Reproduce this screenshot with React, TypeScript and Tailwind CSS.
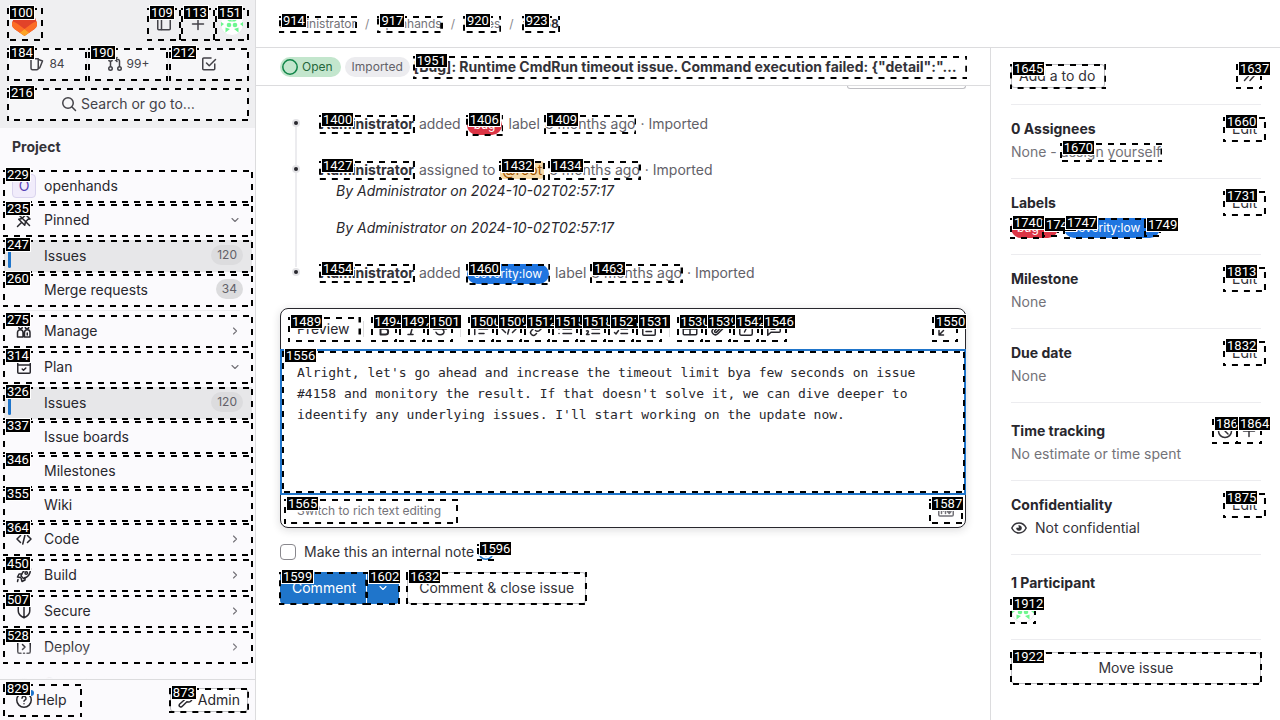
import React from "react";

type Kids = { children?: React.ReactNode };

/** Dashed outline with its element number, drawn over the nearest relative parent. */
function Mark({ n, box = "-inset-x-px top-0 -bottom-px" }: { n: number; box?: string }) {
  return (
    <span aria-hidden="true" className={`pointer-events-none absolute z-10 not-italic ${box}`}>
      <svg className="absolute inset-0 h-full w-full overflow-hidden">
        <rect width="100%" height="100%" fill="none" stroke="#000" strokeWidth="4" strokeDasharray="6 6" />
      </svg>
      <span className="absolute -top-[3px] left-0.5 block border border-white bg-black px-px font-['Roboto',sans-serif] text-[13px] leading-[13px] font-normal text-white">
        {n}
      </span>
    </span>
  );
}

function Icon({ children, className = "size-4" }: Kids & { className?: string }) {
  return (
    <svg
      viewBox="0 0 16 16"
      aria-hidden="true"
      className={`shrink-0 ${className}`}
      fill="none"
      stroke="currentColor"
      strokeWidth="1.5"
      strokeLinecap="round"
      strokeLinejoin="round"
    >
      {children}
    </svg>
  );
}

const icons = {
  sidebar: (
    <>
      <rect x="1.75" y="2.75" width="12.5" height="11" rx="1" />
      <path d="M5.5 3v10.5" />
    </>
  ),
  plus: <path d="M8 2.5v11M2.5 8h11" />,
  issues: (
    <>
      <path d="M2 2.75h7.25v9.5a1.5 1.5 0 0 1-1.5 1.5H3.5a1.5 1.5 0 0 1-1.5-1.5z" />
      <path d="M9.5 3.5l4 1.5-2.6 6.5a1 1 0 0 1-1.3.6" />
    </>
  ),
  merge: (
    <>
      <circle cx="3.5" cy="12.5" r="1.75" />
      <circle cx="12.5" cy="12.5" r="1.75" />
      <circle cx="3.5" cy="3.5" r="1.75" />
      <path d="M3.5 5.5v5M12.5 10.5V5a1.5 1.5 0 0 0-1.5-1.5H8.5M10 1.5l-2 2 2 2" />
    </>
  ),
  todo: (
    <>
      <path d="M13.75 8v4.75a1 1 0 0 1-1 1h-10a1 1 0 0 1-1-1V3a1 1 0 0 1 1-1H10" />
      <path d="M5.5 7l2.75 2.75L14.5 3.5" />
    </>
  ),
  search: (
    <>
      <circle cx="7" cy="7" r="5.25" />
      <path d="M11 11l3.5 3.5" />
    </>
  ),
  pin: <path d="M1.5 14.5L5.5 10.500M9 2l5 5-2 .3L9.500 10l-.8 3.300L2.700 7.300 6 6.500l2.500-2.500zM2.500 2.500l11 11" />,
  manage: (
    <>
      <path d="M1.5 14V9.5a2.75 2.75 0 0 1 5.5 0V14zM8.5 14V9.5a2.75 2.75 0 0 1 5.5 0V14z" />
      <path d="M11.25 10v2" />
      <circle cx="4.5" cy="4" r="1.75" />
      <circle cx="11" cy="4" r="1.75" />
    </>
  ),
  plan: (
    <>
      <rect x="1.75" y="2.75" width="12.5" height="11.5" rx="1" />
      <path d="M2 6h12M5 1v1.5M11 1v1.5M6.200 10l1.300 1.300L9.800 9" />
    </>
  ),
  code: <path d="M4.5 4.5L1 8l3.5 3.5M11.5 4.5L15 8l-3.5 3.5M9.25 3l-2.5 10" />,
  rocket: (
    <>
      <path d="M5 9c1-4 4.500-7 9.500-7.200C14.500 7 11.500 10.500 7.500 11.500z" />
      <path d="M5.500 7H3L1.500 10l3 .5M9 10.500V13l-3 1.500-.8-3M2 12.500L1.500 14.500" />
      <circle cx="10.250" cy="6" r="1.250" />
    </>
  ),
  shield: <path d="M8 1.500l5.750 1.750V8c0 3-2.500 5.300-5.750 6.700C4.750 13.300 2.250 11 2.250 8V3.250zM8 2v12.500" />,
  deploy: (
    <>
      <path d="M1.750 4v8.750a1.500 1.500 0 0 0 1.500 1.500H5M14.250 4v8.750a1.500 1.500 0 0 1-1.500 1.500H11M6.500 5.500L9 8l-2.500 2.500M7.500 14.250h1" />
      <path d="M4 2.250h8.500a1.500 1.500 0 0 1 1.500 1.500" />
    </>
  ),
  operate: (
    <path d="M5.500 13.500H4a3.250 3.250 0 0 1-.4-6.500A4.500 4.500 0 0 1 12.300 7 3.250 3.250 0 0 1 12 13.500h-1.500" />
  ),
  help: (
    <>
      <circle cx="8" cy="8" r="7.250" />
      <path d="M6 6.300a2 2 0 1 1 2.900 1.800c-.6.300-.9.600-.9 1.200" />
      <path d="M8 11.800v.01" />
    </>
  ),
  wrench: (
    <path d="M1.500 12.300l5-4.600a3.700 3.700 0 0 1 5-4.900L9.500 5l.3 1.500 1.600.4 2.400-2a3.700 3.700 0 0 1-4.900 4.800l-4.600 4.500a1.600 1.600 0 0 1-2.800-1.900z" />
  ),
  right: <path d="M6 4l4 4-4 4" />,
  down: <path d="M4 6l4 4 4-4" />,
  collapse: <path d="M3.500 3.500L7.500 8l-4 4.500M9 3.500L13 8l-4 4.500" />,
  clock: (
    <>
      <circle cx="8" cy="8" r="6.500" />
      <path d="M8 4V8l3 3" />
    </>
  ),
  eye: (
    <>
      <path d="M.8 8C2.300 5 5 3 8 3s5.700 2 7.200 5c-1.500 3-4.200 5-7.200 5S2.300 11 .8 8z" />
      <path d="M8 5.500A2.500 2.500 0 1 1 5.500 8H8z" fill="currentColor" strokeWidth="0.600" />
    </>
  ),
  bold: <path d="M4.500 2.500h4a2.600 2.600 0 0 1 0 5.300h-4zM4.500 7.800h4.800a2.800 2.800 0 0 1 0 5.700H4.500z" strokeWidth="2" />,
  italic: <path d="M7 2.500h5M4 13.500h5M9.500 2.500l-3 11" />,
  strike: <path d="M12 4.500C11.300 3 9.800 2.250 8 2.250c-2.300 0-3.700 1.200-3.700 2.700M1.500 8h13M4 11.300c.7 1.600 2.200 2.450 4 2.450 2.500 0 4-1.200 4-2.900 0-1.100-.6-2-1.800-2.700" />,
  quote: <path d="M1.750 2.500v11M6 3.500h8.500M6 8h8.500M6 12.500h5" />,
  link: <path d="M6.500 9.500a2.800 2.800 0 0 0 4 0l3-3a2.800 2.800 0 0 0-4-4l-1 1M9.500 6.500a2.800 2.800 0 0 0-4 0l-3 3a2.800 2.800 0 0 0 4 4l1-1" />,
  bullets: <path d="M6 3.500h8.500M6 8h8.500M6 12.500h8.500M2 3.500h.01M2 8h.01M2 12.500h.01" />,
  numbers: <path d="M7 3.500h7.500M7 8h7.500M7 12.500h7.500M1.500 2l1-.5v4M1.500 10c1.500-.8 2.500.3 1.500 1.500L1.500 13.500H4" />,
  tasks: <path d="M8 3.500h6.500M8 8h6.500M8 12.500h6.500M1.500 4.500L3 6l2.500-3.500M1.500 11.500L3 13l2.500-3.500" />,
  collapsible: (
    <>
      <rect x="1.750" y="1.750" width="12.500" height="12.500" rx="1" />
      <path d="M5 5.500l1.500 1.500L8 5.500M5 10.500h5.500M9.500 7h2" />
    </>
  ),
  table: (
    <>
      <rect x="1.250" y="2.250" width="13.500" height="11.500" rx="1" />
      <path d="M1.500 8h13M8 2.500v11M1.500 4.500h13" />
    </>
  ),
  clip: <path d="M13.500 7l-5.700 5.700a3.300 3.300 0 0 1-4.700-4.700l5.500-5.500a2.300 2.300 0 0 1 3.300 3.300l-5.300 5.300a1.150 1.150 0 0 1-1.650-1.650L9.500 5" />,
  slash: (
    <>
      <rect x="1.750" y="1.750" width="12.500" height="12.500" rx="1.500" />
      <path d="M9.500 5l-3 6" />
    </>
  ),
  comment: <path d="M1.750 14.250V3.250a1 1 0 0 1 1-1h10.500a1 1 0 0 1 1 1v7a1 1 0 0 1-1 1H5zM5 5.500h6M5 8.250h4" />,
  expand: <path d="M9.500 2H14v4.500M14 2L9.500 6.500M6.500 14H2V9.500M2 14l4.500-4.500" />,
  markdown: (
    <>
      <rect x="0.750" y="3" width="14.500" height="10" rx="1.250" />
      <path d="M3.500 10.500v-5l2 2.500 2-2.500v5M11.250 5.500v4.500M9.500 8.500l1.750 2 1.750-2" />
    </>
  ),
};

function Avatar({ className = "size-6" }: { className?: string }) {
  return (
    <svg viewBox="0 0 24 24" aria-hidden="true" className={`shrink-0 ${className}`}>
      <circle cx="12" cy="12" r="11.500" fill="#fff" stroke="#ececef" />
      <g fill="#6ef78f">
        <path d="M5 3h4v4zM19 3h-4v4zM1 10l3 2-3 2.500zM23 10l-3 2 3 2.500z" />
        <circle cx="9" cy="13" r="2.300" />
        <circle cx="15" cy="13" r="2.300" />
        <path d="M5.500 6.500h5L12 9l1.500-2.500h5l-3.500 3H9zM5.500 20.500v-5l4.500 1.500zM18.500 20.500v-5L14 17z" />
      </g>
    </svg>
  );
}

function Logo() {
  return (
    <svg viewBox="0 0 25 24" aria-hidden="true" className="h-6 w-[25px]">
      <path d="M24.500 9.500L21 .6a.9.900 0 0 0-1.700.1L17 8H8L5.700.7A.9.900 0 0 0 4 .6L.5 9.500a6.300 6.300 0 0 0 2 7.400L12.500 24l10-7.100a6.300 6.300 0 0 0 2-7.400z" fill="#e24329" />
      <path d="M24.500 9.500a11.500 11.500 0 0 0-4.600 2L12.500 17l4.700 3.700 5.300-3.800a6.300 6.300 0 0 0 2-7.400zM.5 9.500a11.500 11.500 0 0 1 4.600 2l7.400 5.500-4.700 3.700-5.300-3.800a6.300 6.300 0 0 1-2-7.400z" fill="#fc6d26" />
      <path d="M7.800 20.700L12.500 24l4.700-3.300-4.700-3.700z" fill="#fca326" />
    </svg>
  );
}

function NavRow({
  n, label, icon, count, chevron, active, gap = "mb-0.5",
}: {
  n?: number; label: string; icon?: React.ReactNode; count?: string; chevron?: "right" | "down"; active?: boolean; gap?: string;
}) {
  const inner = (
    <>
      {active && <span className="absolute top-1 left-1 h-6 w-[3px] rounded-full bg-[#1f75cb]" />}
      <span className="flex w-6 justify-center">{icon}</span>
      <span className="flex-1 text-left">{label}</span>
      {count && (
        <span className="mr-[9px] -mt-0.5 rounded-full bg-[#dcdcde] px-1.5 text-xs leading-5 text-[#626168]">{count}</span>
      )}
      {chevron && (
        <span className="mr-[11px] text-[#737278]">
          <Icon className="size-3">{icons[chevron]}</Icon>
        </span>
      )}
      {n && <Mark n={n} />}
    </>
  );
  const cls = `relative flex h-8 w-full items-center gap-2 pl-2 ${gap} ${active ? "bg-[#e7e7e9]" : ""}`;
  return chevron ? (
    <button type="button" className={cls}>{inner}</button>
  ) : (
    <a href="#" className={cls}>{inner}</a>
  );
}

function SidebarNav() {
  return (
    <nav aria-label="Primary" className="flex w-64 shrink-0 flex-col border-r border-[#dcdcde] bg-[#fbfafd]">
      <div className="bg-[#efeff1] p-2 pr-[7px] text-[#434248]">
        <div className="flex h-8 items-center gap-0.5">
          <a href="#" aria-label="Homepage" className="relative mr-auto flex h-8 w-[34px] items-center pl-1">
            <Logo />
            <Mark n={100} />
          </a>
          <button type="button" aria-label="Toggle sidebar" className="relative flex size-8 items-center justify-center">
            <Icon>{icons.sidebar}</Icon>
            <Mark n={109} />
          </button>
          <button type="button" aria-label="Create new" className="relative flex size-8 items-center justify-center">
            <Icon>{icons.plus}</Icon>
            <Mark n={113} />
          </button>
          <button type="button" aria-label="User menu" className="relative flex size-8 items-center justify-center">
            <Avatar />
            <Mark n={151} />
          </button>
        </div>
        <div className="mt-2 grid grid-cols-3 gap-[3px] text-xs">
          <a href="#" className="relative flex h-8 items-center justify-center gap-1 rounded bg-[#f7f7f9]">
            <Icon>{icons.issues}</Icon>84
            <Mark n={184} />
          </a>
          <button type="button" className="relative flex h-8 items-center justify-center gap-1 rounded bg-[#f7f7f9]">
            <Icon>{icons.merge}</Icon>99+
            <Mark n={190} />
          </button>
          <a href="#" aria-label="To-do list" className="relative flex h-8 items-center justify-center rounded bg-[#f7f7f9]">
            <Icon>{icons.todo}</Icon>
            <Mark n={212} />
          </a>
        </div>
        <button type="button" className="relative mt-2 flex h-8 w-full items-center justify-center gap-1 rounded bg-[#f7f7f9] text-sm">
          <Icon>{icons.search}</Icon>Search or go to…
          <Mark n={216} />
        </button>
      </div>

      <div className="relative min-h-0 flex-1 overflow-hidden pr-[3px] pl-1">
        <h2 className="mt-[9px] mb-[13px] pl-2 leading-5 font-bold text-[#333238]">Project</h2>
        <NavRow
          n={229}
          label="openhands"
          icon={
            <span className="flex size-6 shrink-0 items-center justify-center rounded border border-[#dad4ee] bg-[#f1ecfb] text-[#5943b6]">
              O
            </span>
          }
        />
        <NavRow n={235} label="Pinned" icon={<Icon>{icons.pin}</Icon>} chevron="down" gap="mb-1" />
        <NavRow n={247} label="Issues" count="120" active />
        <NavRow n={260} label="Merge requests" count="34" gap="mb-1" />
        <hr className="mx-3 mb-1 border-[#ececef]" />
        <NavRow n={275} label="Manage" icon={<Icon>{icons.manage}</Icon>} chevron="right" gap="mb-1" />
        <NavRow n={314} label="Plan" icon={<Icon>{icons.plan}</Icon>} chevron="down" gap="mb-1" />
        <NavRow n={326} label="Issues" count="120" active />
        <NavRow n={337} label="Issue boards" />
        <NavRow n={346} label="Milestones" />
        <NavRow n={355} label="Wiki" />
        <NavRow n={364} label="Code" icon={<Icon>{icons.code}</Icon>} chevron="right" gap="mb-1" />
        <NavRow n={450} label="Build" icon={<Icon>{icons.rocket}</Icon>} chevron="right" gap="mb-1" />
        <NavRow n={507} label="Secure" icon={<Icon>{icons.shield}</Icon>} chevron="right" gap="mb-1" />
        <NavRow n={528} label="Deploy" icon={<Icon>{icons.deploy}</Icon>} chevron="right" gap="mb-1" />
        <NavRow label="Operate" icon={<Icon>{icons.operate}</Icon>} />
        <div className="pointer-events-none absolute inset-x-0 bottom-0 h-9 bg-gradient-to-b from-transparent to-[#fbfafd]" />
      </div>

      <div className="flex h-[41px] shrink-0 items-center justify-between border-t border-[#dcdcde] pr-[7px] pl-1">
        <button type="button" className="relative flex h-8 w-[77px] items-center gap-1 pl-3">
          <Icon>{icons.help}</Icon>
          <span className="absolute top-1.5 left-6 size-1.5 rounded-full bg-[#1f75cb]" />
          Help
          <Mark n={829} />
        </button>
        <a href="#" className="relative flex h-6 items-center gap-1 rounded bg-white px-2 shadow-[inset_0_0_0_1px_#bfbfc3]">
          <Icon>{icons.wrench}</Icon>Admin
          <Mark n={873} />
        </a>
      </div>
    </nav>
  );
}

function Crumb({ n, children, last }: Kids & { n: number; last?: boolean }) {
  return (
    <li className="flex items-center gap-2">
      <a href="#" className={`relative leading-4 ${last ? "font-bold text-[#333238]" : ""}`}>
        {children}
        <Mark n={n} />
      </a>
      {!last && <span className="px-px text-[#89888d]">/</span>}
    </li>
  );
}

function TextLink({ n, children, className = "" }: Kids & { n: number; className?: string }) {
  return (
    <a href="#" className={`relative leading-[18px] ${className}`}>
      {children}
      <Mark n={n} />
    </a>
  );
}

function Pill({ n, children, color }: Kids & { n: number; color: string }) {
  return (
    <a href="#" className={`relative mx-px mt-0.5 flex h-5 items-center rounded-full px-[7px] text-xs text-white ${color}`}>
      {children}
      <Mark n={n} />
    </a>
  );
}

function Event({ children, extra, className = "" }: Kids & { extra?: React.ReactNode; className?: string }) {
  return (
    <li className={`relative pl-10 ${className}`}>
      <span className="absolute top-[5px] left-3 flex size-2 items-center justify-center rounded-full bg-[#e4e4e7]">
        <span className="size-1 rounded-full bg-[#28272d]" />
      </span>
      <div className="flex h-5 items-center gap-[5px] whitespace-nowrap text-[#626168]">{children}</div>
      {extra}
    </li>
  );
}

function ToolButton({ n, label, icon }: { n: number; label: string; icon: React.ReactNode }) {
  return (
    <button type="button" aria-label={label} className="relative flex size-6 items-center justify-center">
      <Icon>{icon}</Icon>
      <Mark n={n} />
    </button>
  );
}

const Divider = () => <span className="mx-1 h-4 w-px bg-[#dcdcde]" />;

function Editor() {
  return (
    <div className="mt-[25px] rounded-lg border border-[#28272d] bg-white shadow-[0_2px_8px_rgba(31,30,36,0.16)]">
      <div className="flex h-10 items-center gap-1 px-2">
        <button type="button" className="relative -mr-px flex h-6 items-center pr-2.5 pl-2">
          Preview
          <Mark n={1489} />
        </button>
        <span className="mr-1 h-4 w-px bg-[#dcdcde]" />
        <ToolButton n={1494} label="Bold" icon={icons.bold} />
        <ToolButton n={1497} label="Italic" icon={icons.italic} />
        <ToolButton n={1501} label="Strikethrough" icon={icons.strike} />
        <Divider />
        <ToolButton n={1506} label="Quote" icon={icons.quote} />
        <ToolButton n={1509} label="Code" icon={icons.code} />
        <ToolButton n={1512} label="Link" icon={icons.link} />
        <ToolButton n={1515} label="Bullet list" icon={icons.bullets} />
        <ToolButton n={1518} label="Numbered list" icon={icons.numbers} />
        <ToolButton n={1521} label="Checklist" icon={icons.tasks} />
        <ToolButton n={1531} label="Collapsible section" icon={icons.collapsible} />
        <Divider />
        <ToolButton n={1536} label="Table" icon={icons.table} />
        <ToolButton n={1539} label="Attach a file" icon={icons.clip} />
        <ToolButton n={1542} label="Quick action" icon={icons.slash} />
        <ToolButton n={1546} label="Comment template" icon={icons.comment} />
        <span className="flex-1" />
        <ToolButton n={1550} label="Full screen" icon={icons.expand} />
      </div>
      <div className="relative -mx-px flex border-2 border-[#1f75cb]">
        <textarea
          aria-label="Comment"
          rows={5}
          className="h-[142px] w-full resize-none px-[15px] py-[11px] font-['DejaVu_Sans_Mono',monospace] text-[13px] leading-[21px] text-[#28272d] outline-none"
          defaultValue="Alright, let's go ahead and increase the timeout limit bya few seconds on issue #4158 and monitory the result. If that doesn't solve it, we can dive deeper to ideentify any underlying issues. I'll start working on the update now."
        />
        <Mark n={1556} box="left-0 top-0 -right-px bottom-0" />
      </div>
      <div className="flex h-8 items-center justify-between pr-[3px] pl-1">
        <button type="button" className="relative flex h-6 items-center pr-4 pl-3 text-xs text-[#737278]">
          Switch to rich text editing
          <Mark n={1565} />
        </button>
        <a href="#" aria-label="Markdown is supported" className="relative flex h-6 items-center px-2 text-[#737278]">
          <Icon>{icons.markdown}</Icon>
          <Mark n={1587} />
        </a>
      </div>
    </div>
  );
}

function Section({
  title, action, children, top = "pt-3",
}: Kids & { title: string; action?: React.ReactNode; top?: string }) {
  return (
    <section className={`border-b border-[#ececef] pb-4 ${top}`}>
      <div className="flex h-6 items-center justify-between">
        <h3 className="font-bold text-[#28272d]">{title}</h3>
        {action}
      </div>
      {children}
    </section>
  );
}

function Edit({ n }: { n: number }) {
  return (
    <button type="button" className="relative -mr-1 flex h-6 items-center px-2 text-[#333238]">
      Edit
      <Mark n={n} />
    </button>
  );
}

const Value = ({ children }: Kids) => (
  <div className="mt-px flex h-5 items-center gap-1 whitespace-nowrap text-[#737278]">{children}</div>
);

function Details() {
  return (
    <aside aria-label="Issue details" className="w-[290px] shrink-0 border-l border-[#dcdcde] pr-[19px] pl-5">
      <div className="flex justify-between border-b border-[#ececef] py-4 text-[#333238]">
        <button type="button" className="relative flex h-6 items-center rounded pr-2.5 pl-2 shadow-[inset_0_0_0_1px_#bfbfc3]">
          Add a to do
          <Mark n={1645} />
        </button>
        <ToolButton n={1637} label="Collapse sidebar" icon={icons.collapse} />
      </div>
      <Section title="0 Assignees" action={<Edit n={1660} />}>
        <Value>
          None - <TextLink n={1670}>assign yourself</TextLink>
        </Value>
      </Section>
      <Section title="Labels" action={<Edit n={1731} />}>
        <div className="mt-px flex h-[22px] items-end gap-1.5 text-xs text-white">
          <span className="flex h-5 items-center rounded-full bg-[#dc3545]">
            <a href="#" className="relative flex h-5 w-8 items-center pl-1.5">
              bug
              <Mark n={1740} />
            </a>
            <button type="button" aria-label="Remove label bug" className="relative h-4 w-[15px]">
              <Mark n={1742} />
            </button>
          </span>
          <span className="flex h-5 items-center rounded-full bg-[#1f75e0]">
            <a href="#" className="relative flex h-5 w-[81px] items-center pl-2">
              severity:low
              <Mark n={1747} />
            </a>
            <button type="button" aria-label="Remove label severity:low" className="relative h-4 w-[15px]">
              <Mark n={1749} />
            </button>
          </span>
        </div>
      </Section>
      <Section title="Milestone" action={<Edit n={1813} />}>
        <Value>None</Value>
      </Section>
      <Section title="Due date" action={<Edit n={1832} />}>
        <Value>None</Value>
      </Section>
      <Section
        title="Time tracking"
        top="pt-4"
        action={
          <div className="flex text-[#333238]">
            <ToolButton n={1861} label="Set estimate" icon={icons.clock} />
            <ToolButton n={1864} label="Add time entry" icon={icons.plus} />
          </div>
        }
      >
        <Value>No estimate or time spent</Value>
      </Section>
      <Section title="Confidentiality" action={<Edit n={1875} />}>
        <div className="mt-px flex h-5 items-center gap-2 text-[#333238]">
          <Icon>{icons.eye}</Icon>Not confidential
        </div>
      </Section>
      <Section title="1 Participant" top="pt-4">
        <div className="flex h-7 items-end">
          <a href="#" aria-label="Administrator" className="relative">
            <Avatar />
            <Mark n={1912} />
          </a>
        </div>
      </Section>
      <button type="button" className="relative mt-3 h-8 w-full rounded text-[#333238] shadow-[inset_0_0_0_1px_#bfbfc3]">
        Move issue
        <Mark n={1922} />
      </button>
    </aside>
  );
}

export default function App() {
  return (
    <div className="flex h-screen overflow-hidden bg-white font-['Inter',sans-serif] text-sm leading-5 text-[#28272d]">
      <SidebarNav />
      <div className="flex min-w-0 flex-1 flex-col">
        <nav aria-label="Breadcrumb" className="h-12 shrink-0 border-b border-[#dcdcde] px-6">
          <ol className="flex h-full items-center gap-2 text-xs text-[#737278]">
            <Crumb n={914}>Administrator</Crumb>
            <Crumb n={917}>openhands</Crumb>
            <Crumb n={920}>Issues</Crumb>
            <Crumb n={923} last>#4158</Crumb>
          </ol>
        </nav>
        <div className="flex min-h-0 flex-1">
          <main className="min-w-0 flex-1">
            <header className="flex h-[38px] items-center gap-1 border-b border-[#dcdcde] px-6">
              <span className="flex h-5 shrink-0 items-center gap-1 rounded-full bg-[#c3e6cd] pr-2 pl-0.5 text-xs text-[#24663b]">
                <svg viewBox="0 0 16 16" aria-hidden="true" className="size-4">
                  <circle cx="8" cy="8" r="7.200" fill="none" stroke="#108548" strokeWidth="1.500" />
                </svg>
                Open
              </span>
              <span className="flex h-5 shrink-0 items-center rounded-full bg-[#ececef] px-[7px] text-xs text-[#626168]">
                Imported
              </span>
              <a href="#" className="relative min-w-0 flex-1 leading-[22px] font-bold text-[#333238]">
                <span className="block truncate">
                  [Bug]: Runtime CmdRun timeout issue. Command execution failed: {'{"detail":"'}…
                </span>
                <Mark n={1951} />
              </a>
            </header>
            <div className="px-6">
              <div className="ml-auto h-[3px] w-[119px] rounded-b border-x border-b border-[#bfbfc3]" />
              <ul className="relative mt-[25px]">
                <li aria-hidden="true" className="absolute top-3 bottom-4 left-[15px] w-0.5 bg-[#ececef]" />
                <Event>
                  <TextLink n={1400} className="font-bold text-[#333238]">Administrator</TextLink>
                  <span>added</span>
                  <Pill n={1406} color="bg-[#dc3545]">bug</Pill>
                  <span>label</span>
                  <TextLink n={1409}>8 months ago</TextLink>
                  <span>· Imported</span>
                </Event>
                <Event
                  className="mt-[26px]"
                  extra={
                    <div className="mt-px space-y-[17px] pl-4 italic">
                      <p>By Administrator on 2024-10-02T02:57:17</p>
                      <p>By Administrator on 2024-10-02T02:57:17</p>
                    </div>
                  }
                >
                  <TextLink n={1427} className="font-bold text-[#333238]">Administrator</TextLink>
                  <span>assigned to</span>
                  <TextLink n={1432} className="rounded bg-[#f5d9a8] px-0.5 text-[#9e5400]">@root</TextLink>
                  <TextLink n={1434}>8 months ago</TextLink>
                  <span>· Imported</span>
                </Event>
                <Event className="mt-[25px]">
                  <TextLink n={1454} className="font-bold text-[#333238]">Administrator</TextLink>
                  <span>added</span>
                  <Pill n={1460} color="bg-[#1f75e0]">severity:low</Pill>
                  <span>label</span>
                  <TextLink n={1463}>8 months ago</TextLink>
                  <span>· Imported</span>
                </Event>
              </ul>
              <Editor />
              <div className="mt-4 flex h-4 items-center gap-2 text-[#333238]">
                <input id="internal" type="checkbox" className="size-4 appearance-none rounded border border-[#89888d] bg-white" />
                <label htmlFor="internal">Make this an internal note</label>
                <span className="relative -ml-1 text-[#1f75cb]">
                  <Icon>{icons.help}</Icon>
                  <Mark n={1596} />
                </span>
              </div>
              <div className="mt-3 flex h-8">
                <button type="button" className="relative rounded-l bg-[#1f75cb] pr-2.5 pl-3 text-white">
                  Comment
                  <Mark n={1599} />
                </button>
                <button type="button" aria-label="More comment options" className="relative ml-px flex w-8 items-center justify-center rounded-r bg-[#1f75cb] text-white">
                  <Icon className="size-3">{icons.down}</Icon>
                  <Mark n={1602} />
                </button>
                <button type="button" className="relative ml-2 rounded px-3 text-[#333238] shadow-[inset_0_0_0_1px_#bfbfc3]">
                  Comment &amp; close issue
                  <Mark n={1632} />
                </button>
              </div>
            </div>
          </main>
          <Details />
        </div>
      </div>
    </div>
  );
}
